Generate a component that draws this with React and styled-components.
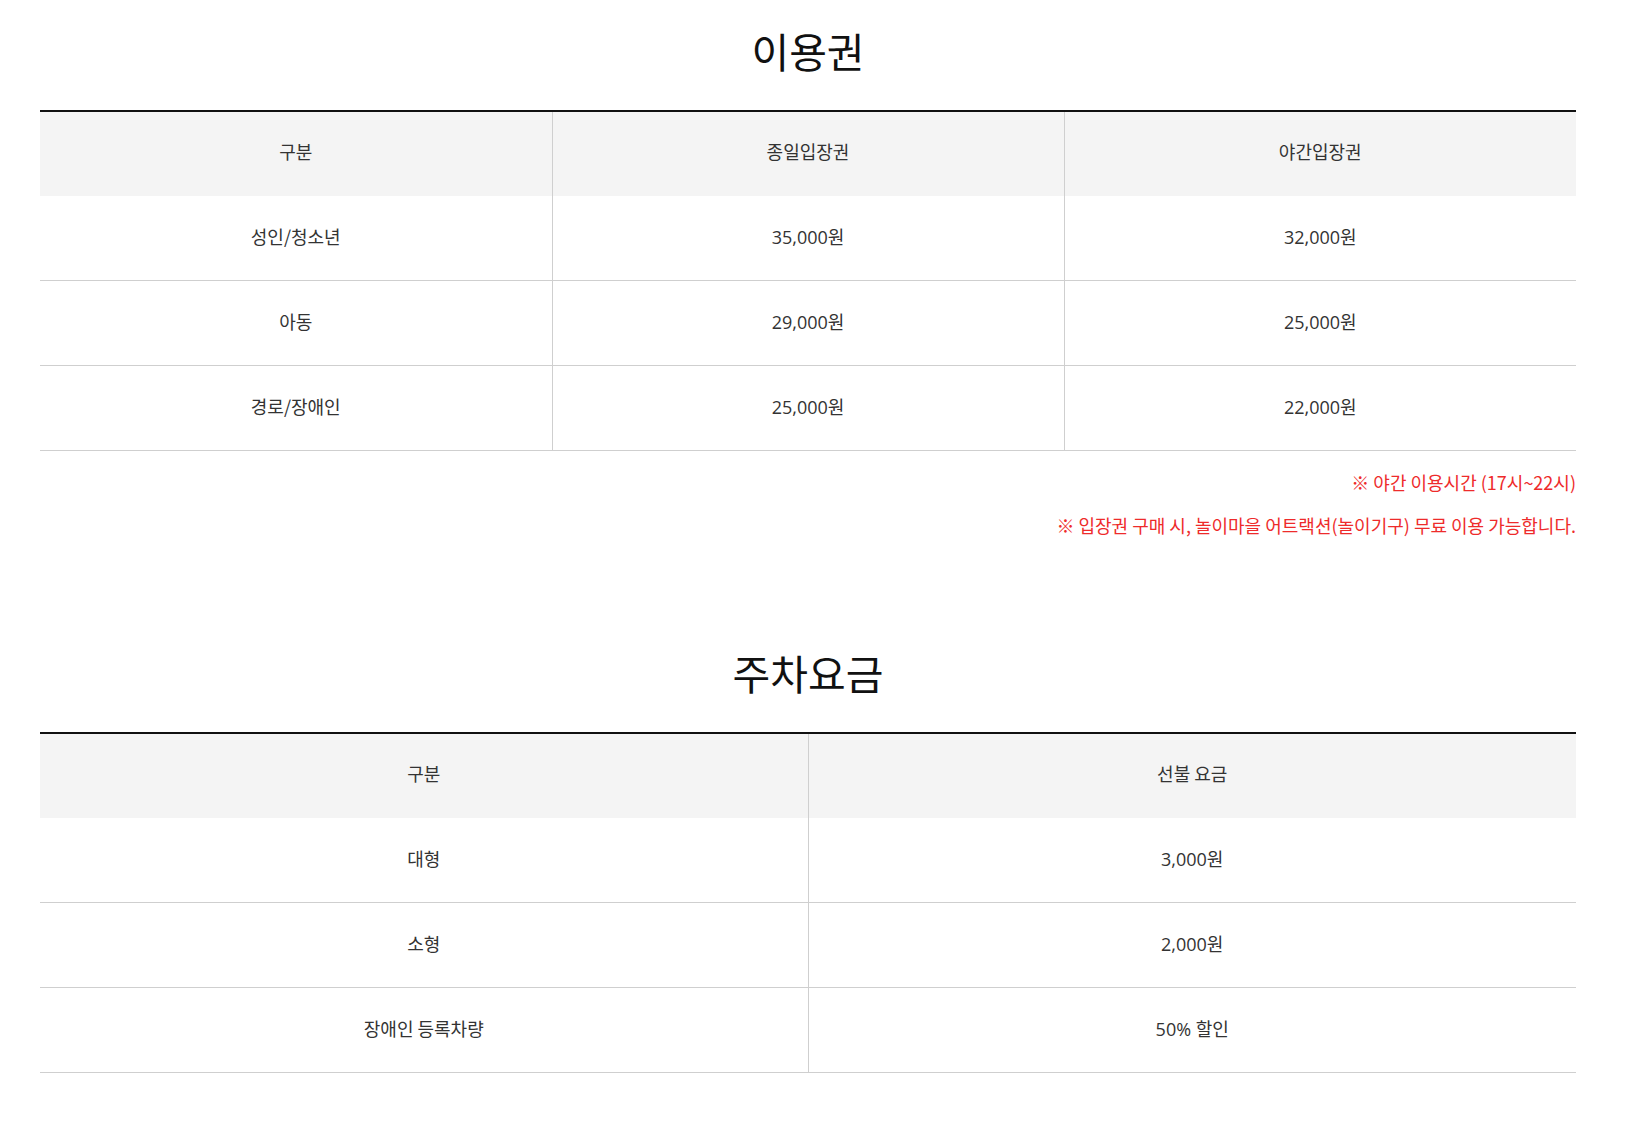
import styled, { createGlobalStyle } from "styled-components";

const GlobalStyle = createGlobalStyle`
  body {
    margin: 0;
    background: #fff;
    font-family: "Noto Sans CJK KR", "Noto Sans", sans-serif;
    color: #222;
  }
`;

const Page = styled.div`
  width: 1536px;
  margin: 0 0 0 40px;
  padding: 22px 0 60px;
`;

const Section = styled.section`
  margin-bottom: ${(p) => p.gap || 0}px;
`;

const Title = styled.h2`
  margin: 0 0 32px;
  font-size: 41px;
  line-height: 56px;
  font-weight: 400;
  text-align: center;
  color: #111;
`;

const Table = styled.table`
  width: 100%;
  border-collapse: collapse;
  table-layout: fixed;
  border-top: 2px solid #111;
`;

const Th = styled.th`
  height: 78px;
  padding: 0 0 6px;
  background: #f4f4f4;
  font-size: 18px;
  font-weight: 400;
  color: #333;
  text-align: center;
  & + & {
    border-left: 1px solid #cfcfcf;
  }
`;

const Td = styled.td`
  height: 80px;
  padding: 0 0 4px;
  font-size: 18px;
  color: #333;
  text-align: center;
  border-bottom: 1px solid #cfcfcf;
  font-family: ${(p) => (p.num ? '"Open Sans", "Noto Sans CJK KR", sans-serif' : "inherit")};
  & + & {
    border-left: 1px solid #cfcfcf;
  }
`;

const Note = styled.p`
  margin: 19px 0 0;
  font-size: 18px;
  line-height: 24px;
  color: #ee2b2b;
  text-align: right;
`;

const tickets = [
  ["성인/청소년", "35,000원", "32,000원"],
  ["아동", "29,000원", "25,000원"],
  ["경로/장애인", "25,000원", "22,000원"],
];

const parking = [
  ["대형", "3,000원"],
  ["소형", "2,000원"],
  ["장애인 등록차량", "50% 할인"],
];

export default function App() {
  return (
    <>
      <GlobalStyle />
      <Page>
        <Section gap={107}>
          <Title>이용권</Title>
          <Table>
            <thead>
              <tr>
                <Th>구분</Th>
                <Th>종일입장권</Th>
                <Th>야간입장권</Th>
              </tr>
            </thead>
            <tbody>
              {tickets.map((row) => (
                <tr key={row[0]}>
                  <Td>{row[0]}</Td>
                  <Td num>{row[1]}</Td>
                  <Td num>{row[2]}</Td>
                </tr>
              ))}
            </tbody>
          </Table>
          <Note>※ 야간 이용시간 (17시~22시)</Note>
          <Note>※ 입장권 구매 시, 놀이마을 어트랙션(놀이기구) 무료 이용 가능합니다.</Note>
        </Section>
        <Section>
          <Title>주차요금</Title>
          <Table>
            <thead>
              <tr>
                <Th>구분</Th>
                <Th>선불 요금</Th>
              </tr>
            </thead>
            <tbody>
              {parking.map((row) => (
                <tr key={row[0]}>
                  <Td>{row[0]}</Td>
                  <Td num>{row[1]}</Td>
                </tr>
              ))}
            </tbody>
          </Table>
        </Section>
      </Page>
    </>
  );
}
